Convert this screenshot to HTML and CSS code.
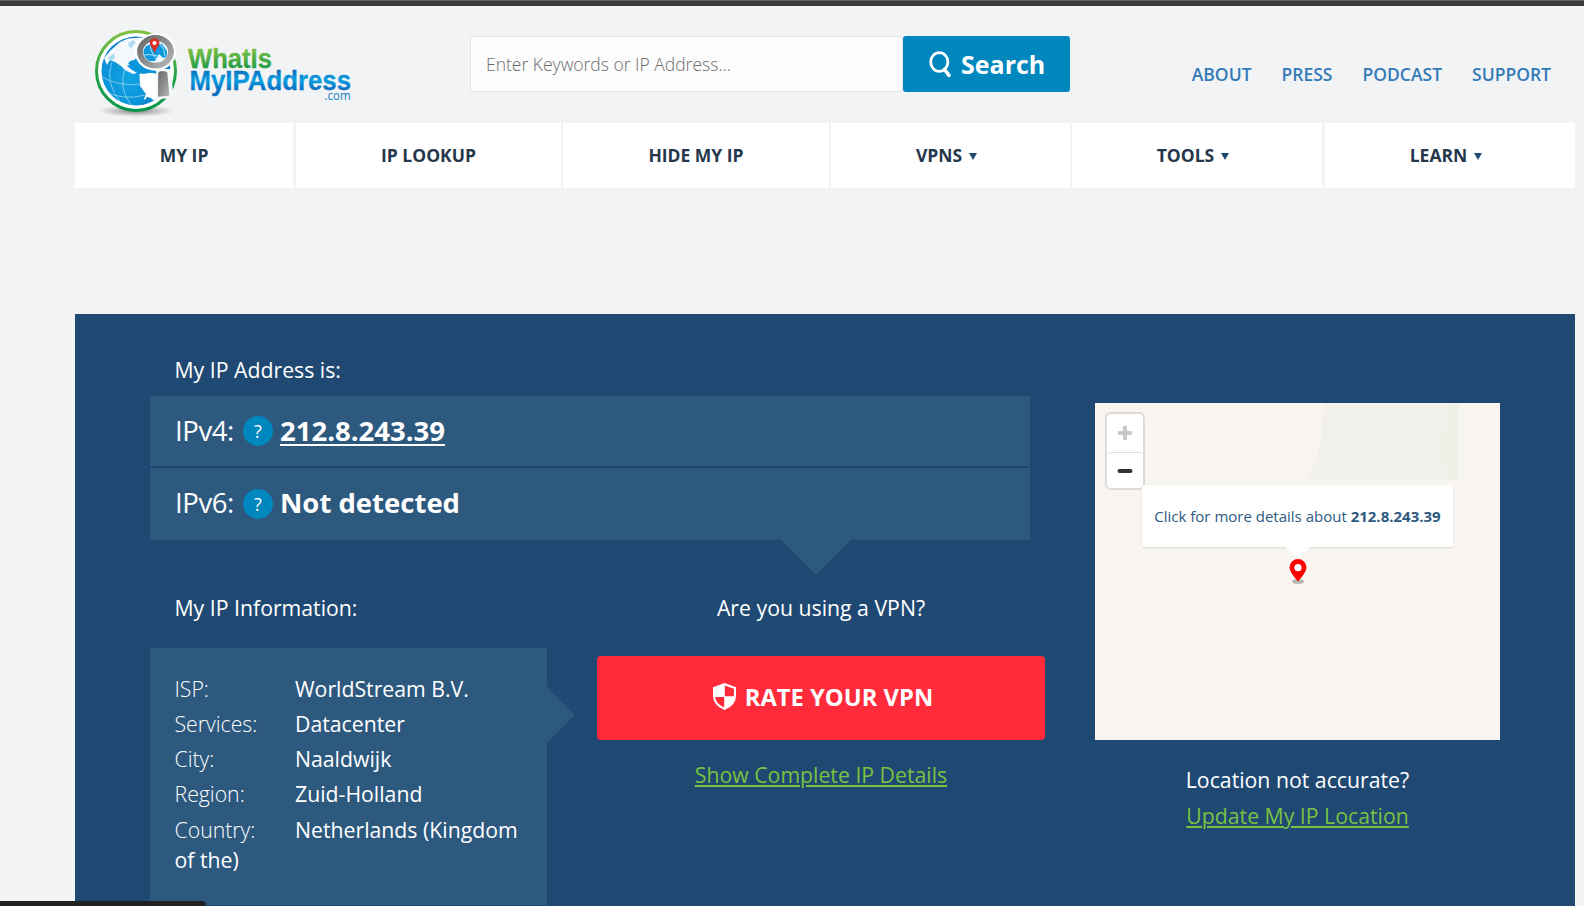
FILE: index.html
```html
<!DOCTYPE html>
<html lang="en">
<head>
<meta charset="utf-8">
<title>What Is My IP Address</title>
<link rel="stylesheet" href="styles.css">
</head>
<body>
<div class="browser-edge"></div>
<div class="container">
  <header class="header">
    <svg class="logo" width="270" height="96" viewBox="90 24 270 96" role="img" aria-label="WhatIsMyIPAddress.com">
      <defs>
        <linearGradient id="ring" x1="0" y1="0" x2="0" y2="1"><stop offset="0" stop-color="#7fc241"/><stop offset=".6" stop-color="#1f9f48"/><stop offset="1" stop-color="#069648"/></linearGradient>
        <linearGradient id="green" gradientUnits="userSpaceOnUse" x1="0" y1="48" x2="0" y2="69"><stop offset="0" stop-color="#80c342"/><stop offset="1" stop-color="#1f9a48"/></linearGradient>
        <linearGradient id="blue" gradientUnits="userSpaceOnUse" x1="0" y1="70" x2="0" y2="94"><stop offset="0" stop-color="#0a6ebd"/><stop offset=".42" stop-color="#0aa0e0"/><stop offset=".8" stop-color="#0a70c0"/><stop offset="1" stop-color="#0a6ebd"/></linearGradient>
        <radialGradient id="sea" cx=".4" cy=".6" r=".62"><stop offset="0" stop-color="#12a4e4"/><stop offset=".6" stop-color="#0c92d8"/><stop offset="1" stop-color="#0872bd"/></radialGradient>
        <radialGradient id="shadow"><stop offset="0" stop-color="#555" stop-opacity=".75"/><stop offset="1" stop-color="#888" stop-opacity="0"/></radialGradient>
        <linearGradient id="steel" x1="0" y1="0" x2="1" y2="1"><stop offset="0" stop-color="#686a6c"/><stop offset=".5" stop-color="#8b8d8f"/><stop offset="1" stop-color="#b4b6b8"/></linearGradient>
        <clipPath id="globe"><circle cx="136" cy="71" r="34.5"/></clipPath>
        <clipPath id="lens"><ellipse cx="155.500" cy="51.500" rx="12" ry="11"/></clipPath>
      </defs>
      <ellipse cx="136" cy="111" rx="39" ry="6" fill="url(#shadow)"/>
      <circle cx="136" cy="71" r="39.500" fill="#fff" stroke="url(#ring)" stroke-width="3"/>
      <g clip-path="url(#globe)">
        <rect x="100" y="35" width="72" height="72" fill="url(#sea)"/>
        <path d="M104 58L111 50L120 42L128 38.500L142 37.500L142 54L135 59L132 64L127 66L132 70L137 73L133 74L125 70L121 66L115 62L110 60L107 65Z" fill="#f6f9fb"/>
        <path d="M139.500 74L147 72L153 73L176 79V107H156L148 106L144 99L146 94L140 86Z" fill="#fff"/>
        <path d="M147 97Q152 97 156 104L147 108L141 105Z" fill="#0b86cf"/>
        <path d="M108 58L114 53L115 58L111 61ZM128 43l5-3 3 3-3 2-1 3-3-1z" fill="#9bd3ef" opacity=".8"/>
        <path d="M130 61l4-1 2 3 3-3 2 4-2 3 5 2 7 1 4 3-6 0-6 1-5-3-4-1-2-4-4-2z" fill="#0b94da"/>
        <path d="M102 77Q119 87 142 84M104 91Q122 101 146 95M112 62Q104 82 121 103M125 69Q118 88 131 105" fill="none" stroke="#a6dcf4" stroke-width=".7"/>
      </g>
      <ellipse cx="155.500" cy="52" rx="20.500" ry="18.800" fill="#fff"/>
      <ellipse cx="155.500" cy="51.800" rx="15.500" ry="13.800" fill="#eef8fd" stroke="url(#steel)" stroke-width="5.800"/>
      <g clip-path="url(#lens)">
        <path d="M142 53l4-7 8-3 8 1 5 7 0 6-4 1-4-4-4 7-6 0-6-3z" fill="#0c9add"/>
        <path d="M144 55q10-2 23 5M150 46q3 12 11 17M160 44q5 5 5 12" fill="none" stroke="#d6f0fb" stroke-width=".8"/>
      </g>
      <path d="M154.500 53Q152 47 150 45Q148.500 38.500 154.500 38.300Q160.500 38.500 159 45Q156 49 154.500 53Z" fill="#dc3026"/>
      <circle cx="154.500" cy="43" r="2.100" fill="#fff"/>
      <path d="M156 69h15.500l1.500 28.500-16 2z" fill="#f7f8f9"/>
      <path d="M158.300 73.200q.2-2 2.200-2h4.500q2.200 0 2.400 2l2 22.500-11.500 1z" fill="url(#steel)"/>
      <text class="mark" x="188" y="68" textLength="84" lengthAdjust="spacingAndGlyphs" fill="url(#green)" stroke="url(#green)">WhatIs</text>
      <text class="mark" x="189.500" y="89.500" textLength="161.500" lengthAdjust="spacingAndGlyphs" fill="url(#blue)" stroke="url(#blue)">MyIPAddress</text>
      <text class="mark-com" x="324.500" y="99.500" textLength="26" lengthAdjust="spacingAndGlyphs" fill="#1580c6">.com</text>
    </svg>
    <form class="search">
      <div class="search-field">Enter Keywords or IP Address...</div>
      <div class="search-button">
        <svg width="23" height="27" viewBox="0 0 23 27"><ellipse cx="10.300" cy="11" rx="8.600" ry="9.300" fill="none" stroke="#fff" stroke-width="2.800"/><path d="M15.500 18.500l4.500 5.800" stroke="#fff" stroke-width="3.600" stroke-linecap="round"/></svg>
        <span>Search</span>
      </div>
    </form>
    <nav class="top-links"><a>ABOUT</a><a>PRESS</a><a>PODCAST</a><a>SUPPORT</a></nav>
  </header>
  <nav class="main-nav">
    <a>MY IP</a><a>IP LOOKUP</a><a>HIDE MY IP</a>
    <a>VPNS<i class="caret"></i></a><a>TOOLS<i class="caret"></i></a><a>LEARN<i class="caret"></i></a>
  </nav>
  <main class="panel">
    <section class="details">
      <h2 class="heading">My IP Address is:</h2>
      <div class="ip-row"><span class="ip-label">IPv4:</span><span class="help">?</span><a class="ip-value ip-link">212.8.243.39</a></div>
      <div class="ip-row ip-row-last"><span class="ip-label">IPv6:</span><span class="help">?</span><span class="ip-value">Not detected</span></div>
      <div class="lower">
        <div class="info">
          <h2 class="heading info-heading">My IP Information:</h2>
          <div class="info-box">
            <p><span class="key">ISP:</span><span>WorldStream B.V.</span></p>
            <p><span class="key">Services:</span><span>Datacenter</span></p>
            <p><span class="key">City:</span><span>Naaldwijk</span></p>
            <p><span class="key">Region:</span><span>Zuid-Holland</span></p>
            <p><span class="key">Country:</span><span>Netherlands (Kingdom of the)</span></p>
          </div>
        </div>
        <div class="vpn">
          <h2 class="heading vpn-heading">Are you using a VPN?</h2>
          <div class="rate">
            <svg width="23" height="27" viewBox="0 0 22 27" preserveAspectRatio="none"><path d="M11 0L22 4.300V13Q22 22.500 11 27Q0 22.500 0 13V4.300Z" fill="#fff"/><path d="M11.300 2.600L20 5.700V13.200H11.300ZM10.700 13.900V24.500Q2.600 20.500 2 13.900Z" fill="#ff2a3a"/></svg>
            <span>RATE YOUR VPN</span>
          </div>
          <a class="green-link">Show Complete IP Details</a>
        </div>
      </div>
    </section>
    <section class="location">
      <div class="map">
        <svg class="map-tile" width="405" height="77" viewBox="0 0 405 77"><path d="M229 0H364V77H211Q224 58 226 35Z" fill="#f2f0ea"/><path d="M348 7q4-6 16-7v77h-18l2-12-8-10 2-12-12-6 10-5 12-4-3-12z" fill="#eff0e8"/><circle cx="301" cy="53" r="7" fill="#f1f0e9"/></svg>
        <div class="zoom">
          <div class="zoom-key"><svg width="16" height="16"><path d="M8 2.500v11M2.500 8h11" stroke="#c8c8c8" stroke-width="4" stroke-linecap="round"/></svg></div>
          <div class="zoom-key zoom-out"><svg width="16" height="16"><path d="M2.500 8h11" stroke="#333" stroke-width="4" stroke-linecap="round"/></svg></div>
        </div>
        <div class="popup"><span>Click for more details about <b>212.8.243.39</b></span></div>
        <svg class="pin" width="20" height="27" viewBox="0 0 20 27"><ellipse cx="10" cy="22.500" rx="6" ry="2.500" fill="#777" opacity=".5"/><path d="M10 22.500Q1.500 13 1.500 8.500A8.500 8.500 0 0 1 18.500 8.500Q18.500 13 10 22.500Z" fill="#f00"/><circle cx="10" cy="8.700" r="3.600" fill="#fff"/></svg>
      </div>
      <p class="question">Location not accurate?</p>
      <a class="green-link update">Update My IP Location</a>
    </section>
  </main>
</div>
<div class="status"></div>
</body>
</html>
```
FILE: styles.css
```css
* { box-sizing: border-box; }
body {
  margin: 0;
  width: 1584px;
  height: 906px;
  overflow: hidden;
  background: #f1f3f5;
  font-family: "Open Sans", "Noto Sans", sans-serif;
  color: #fff;
}
h2, p { margin: 0; font-weight: 400; }
span, a, text { white-space: nowrap; }
.browser-edge { height: 6px; background: #3b3b3b; border-top: 1px solid #646464; }
.container { width: 1500px; margin-left: 75px; }

.header { display: flex; height: 117px; padding: 18px 0 0 15px; }
.logo { flex: none; }
.mark { font-family: "Liberation Sans", Arial, sans-serif; font-size: 27px; font-weight: 700; stroke-width: .3; stroke-linejoin: round; }
.mark-com { font-size: 12px; font-weight: 500; }
.search { display: flex; margin: 12px 0 0 110px; height: 56px; width: 600px; }
.search-field {
  width: 433px;
  padding-left: 15px;
  border: 1px solid #e1e3e4;
  background: #fcfcfc;
  color: #6c6c6c;
  font-size: 17.5px;
  font-weight: 300;
  line-height: 54px;
}
.search-button {
  display: flex;
  align-items: center;
  width: 167px;
  padding-left: 26px;
  gap: 9px;
  border-radius: 3px;
  background: #0087be;
  font-size: 25px;
  font-weight: 700;
}
.top-links {
  display: flex;
  gap: 30px;
  margin: 38px 24px 0 auto;
  color: #337ab7;
  font-size: 17.5px;
  font-weight: 600;
  line-height: 25px;
}
.main-nav {
  display: grid;
  grid-template-columns: 221px 267px 268px 241px 253px 250px;
  height: 65px;
  color: #25374b;
  font-size: 17.5px;
  font-weight: 700;
}
.main-nav a {
  display: flex;
  align-items: center;
  justify-content: center;
  padding-bottom: 2px;
  border-right: 2px solid #f1f3f5;
  background: #fff;
}
.main-nav a:nth-child(1), .main-nav a:nth-child(5) { border-right-width: 3px; }
.main-nav a:last-child { border-right: 0; }
.caret {
  margin: 3px 8px 0 7px;
  border: 4px solid transparent;
  border-top: 7px solid #1f4972;
  border-bottom: 0;
}

.panel { display: flex; height: 592px; margin-top: 126px; padding: 0 75px; background: #1f4972; }
.details { width: 895px; }
.heading { font-size: 21.25px; line-height: 30px; }
.details > .heading { padding: 41px 0 0 24.500px; height: 82px; }
.ip-row {
  display: flex;
  align-items: center;
  width: 880px;
  height: 70px;
  margin-bottom: 2px;
  padding-left: 25px;
  background: #2d597f;
  font-size: 27.5px;
}
.ip-row-last { position: relative; height: 72px; margin: 0; padding-bottom: 1px; }
.ip-row-last::after {
  content: "";
  position: absolute;
  left: 631px;
  top: 72px;
  border: 35px solid transparent;
  border-top-color: #2d597f;
  border-bottom: 0;
}
.ip-label { width: 68px; padding-bottom: 2px; font-weight: 400; letter-spacing: -.4px; }
.help {
  width: 30px;
  height: 30px;
  margin-right: 7px;
  border-radius: 50%;
  background: #0087be;
  font-size: 18px;
  line-height: 30px;
  text-align: center;
}
.ip-value { padding-bottom: 2px; font-weight: 700; }
.ip-link { text-decoration: underline; text-decoration-thickness: 2px; text-underline-offset: 3px; }
.lower { display: flex; justify-content: space-between; }
.info { width: 397px; }
.info-heading { height: 108px; padding: 53px 0 0 24.500px; }
.info-box {
  position: relative;
  height: 257px;
  padding: 25.500px 24px 0 24.500px;
  background: #2d597f;
  font-size: 21.25px;
  line-height: 30px;
}
.info-box::after {
  content: "";
  position: absolute;
  left: 397px;
  top: 39px;
  border: 28.500px solid transparent;
  border-left-color: #2d597f;
  border-right: 0;
}
.info-box p { margin-bottom: 5.300px; }
.info-box span { white-space: normal; }
.info-box .key { display: inline-block; width: 120.500px; font-weight: 300; }
.vpn { width: 448px; text-align: center; }
.vpn-heading { height: 116px; padding-top: 53px; }
.rate {
  display: flex;
  align-items: center;
  justify-content: center;
  gap: 9px;
  height: 84px;
  margin-bottom: 20px;
  padding: 0 0 3px 4px;
  border-radius: 4px;
  background: #ff2a3a;
  font-size: 23.750px;
  font-weight: 700;
}
.green-link {
  color: #7ac142;
  font-size: 21.25px;
  line-height: 30px;
  text-decoration: underline;
  text-decoration-thickness: 2px;
  text-underline-offset: 2px;
}
.location { width: 405px; margin: 89px 0 0 50px; text-align: center; }
.map { position: relative; height: 337px; margin-bottom: 25px; background: #f8f4ef; }
.map-tile { display: block; }
.zoom {
  position: absolute;
  left: 10px;
  top: 9px;
  width: 40px;
  height: 78px;
  border: 2px solid #dedbd6;
  border-radius: 6px;
  background: #fff;
}
.zoom-key { display: flex; height: 38px; align-items: center; justify-content: center; }
.zoom-out { height: 36px; border-top: 1px solid #ddd; border-radius: 4px; }
.popup {
  position: absolute;
  left: 47px;
  top: 82px;
  width: 311px;
  height: 62px;
  border-radius: 3px;
  background: #fff;
  box-shadow: 0 1px 2px rgba(0, 0, 0, .12);
  color: #2d597f;
  font-size: 15px;
  line-height: 63px;
}
.popup::after {
  content: "";
  position: absolute;
  left: 143.500px;
  top: 62px;
  border: 12px solid transparent;
  border-top-color: #fff;
  border-bottom: 0;
}
.pin { position: absolute; left: 192.500px; top: 155.500px; }
.question { font-size: 21.25px; line-height: 30px; margin-bottom: 6px; }
.update { display: block; }
.status {
  position: absolute;
  left: 0;
  top: 901px;
  width: 206px;
  height: 5px;
  border-radius: 0 4px 0 0;
  background: #222;
}
```
